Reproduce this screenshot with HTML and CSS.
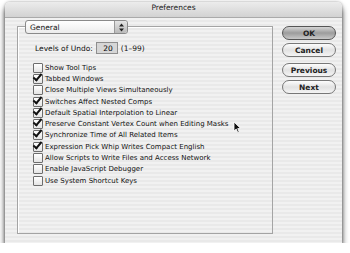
FILE: index.html
```html
<!DOCTYPE html>
<html lang="en">
<head>
  <meta charset="UTF-8">
  <title>Preferences</title>
  <link rel="stylesheet" href="styles.css">
</head>
<body>
  <div class="window">
    <div class="titlebar">Preferences</div>
    <div class="content">
      <section class="group">
        <div class="popup">
          <span class="popup-label">General</span>
          <span class="popup-arrows">
            <svg width="7" height="9" viewBox="0 0 7 9"><path d="M3.5 0.5 L6 3.5 L1 3.5 Z M3.5 8.5 L6 5.5 L1 5.5 Z" fill="#222"/></svg>
          </span>
        </div>
        <div class="undo-row">
          <label for="undo">Levels of Undo:</label>
          <input id="undo" class="undo-input" type="text" value="20">
          <span>(1–99)</span>
        </div>
        <ul class="options">
          <li><span class="box"></span>Show Tool Tips</li>
          <li><span class="box on"></span>Tabbed Windows</li>
          <li><span class="box"></span>Close Multiple Views Simultaneously</li>
          <li><span class="box on"></span>Switches Affect Nested Comps</li>
          <li><span class="box on"></span>Default Spatial Interpolation to Linear</li>
          <li><span class="box on"></span>Preserve Constant Vertex Count when Editing Masks</li>
          <li><span class="box on"></span>Synchronize Time of All Related Items</li>
          <li><span class="box on"></span>Expression Pick Whip Writes Compact English</li>
          <li><span class="box"></span>Allow Scripts to Write Files and Access Network</li>
          <li><span class="box"></span>Enable JavaScript Debugger</li>
          <li><span class="box"></span>Use System Shortcut Keys</li>
        </ul>
      </section>
      <div class="buttons">
        <button class="btn default">OK</button>
        <button class="btn">Cancel</button>
        <button class="btn spaced">Previous</button>
        <button class="btn">Next</button>
      </div>
    </div>
    <svg class="cursor" width="9" height="13" viewBox="0 0 9 13"><path d="M1 1 L1 10 L3.2 8 L4.8 11.6 L6.2 11 L4.7 7.5 L7.6 7.5 Z" fill="#111" stroke="#fff" stroke-width="0.8"/></svg>
  </div>
</body>
</html>
```

FILE: styles.css
```css
body {
  margin: 0;
  background: #fff;
  font-family: "DejaVu Sans", sans-serif;
  font-size: 7px;
  color: #111;
}
.window {
  position: relative;
  margin: 2px 0 0 5px;
  width: 337px;
  height: 241px;
  border-radius: 5px 5px 0 0;
  background: repeating-linear-gradient(#f1f1f1 0, #f1f1f1 2px, #e9e9e9 2px, #e9e9e9 4px);
  box-shadow: 0 5px 6px rgba(0, 0, 0, 0.75), 0 0 3px rgba(0, 0, 0, 0.35);
}
.titlebar {
  height: 15px;
  line-height: 11px;
  text-align: center;
  font-size: 7.5px;
  color: #222;
  border-radius: 5px 5px 0 0;
  background: linear-gradient(#ececec, #d2d2d2);
  border-bottom: 1px solid #aaa;
}
.content {
  display: flex;
  padding: 8px 0 0 12px;
}
.group {
  width: 254px;
  height: 206px;
  border: 1px solid #a4a4a4;
  box-shadow: inset 1px 1px 0 #fff;
}
.popup {
  display: flex;
  align-items: center;
  width: 101px;
  height: 12px;
  margin: -7px 0 0 7px;
  border: 1px solid #8a8a8a;
  border-radius: 3px;
  background: linear-gradient(#fff, #ececec);
  font-size: 7.5px;
}
.popup-label {
  flex: 1;
  padding-left: 4px;
}
.popup-arrows {
  display: flex;
  align-items: center;
  justify-content: center;
  width: 12px;
  height: 12px;
  border-left: 1px solid #999;
  border-radius: 0 3px 3px 0;
  background: linear-gradient(#e4e4e4, #b9b9b9);
}
.undo-row {
  display: flex;
  align-items: center;
  gap: 3px;
  margin: 8px 0 0 17px;
  font-size: 7.5px;
}
.undo-input {
  width: 22px;
  height: 12px;
  box-sizing: border-box;
  border: 1px solid #8e8e8e;
  background: #d6d6d6;
  font: inherit;
  text-align: right;
  padding: 0 4px;
}
.options {
  list-style: none;
  margin: 8px 0 0 15px;
  padding: 0;
}
.options li {
  display: flex;
  align-items: center;
  height: 11.3px;
  gap: 2px;
}
.box {
  position: relative;
  width: 8px;
  height: 8px;
  border: 1px solid #6d6d6d;
  border-radius: 1px;
  background: linear-gradient(#fff, #e4e4e4);
}
.box.on::after {
  content: "";
  position: absolute;
  left: 1px;
  top: -3px;
  width: 3px;
  height: 7px;
  border: solid #111;
  border-width: 0 2px 2px 0;
  transform: rotate(40deg);
}
.buttons {
  display: flex;
  flex-direction: column;
  gap: 3px;
  margin-left: 9px;
}
.btn {
  width: 54px;
  height: 14px;
  padding: 0;
  border: 1px solid #777;
  border-radius: 7px;
  background: linear-gradient(#fdfdfd, #e2e2e2 50%, #f4f4f4);
  font: bold 7.5px "DejaVu Sans", sans-serif;
  color: #222;
}
.btn.default {
  background: linear-gradient(#d6d6d6, #9c9c9c 50%, #c8c8c8);
  border-color: #555;
}
.btn.spaced {
  margin-top: 3px;
}
.cursor {
  position: absolute;
  left: 228px;
  top: 119px;
}
```
